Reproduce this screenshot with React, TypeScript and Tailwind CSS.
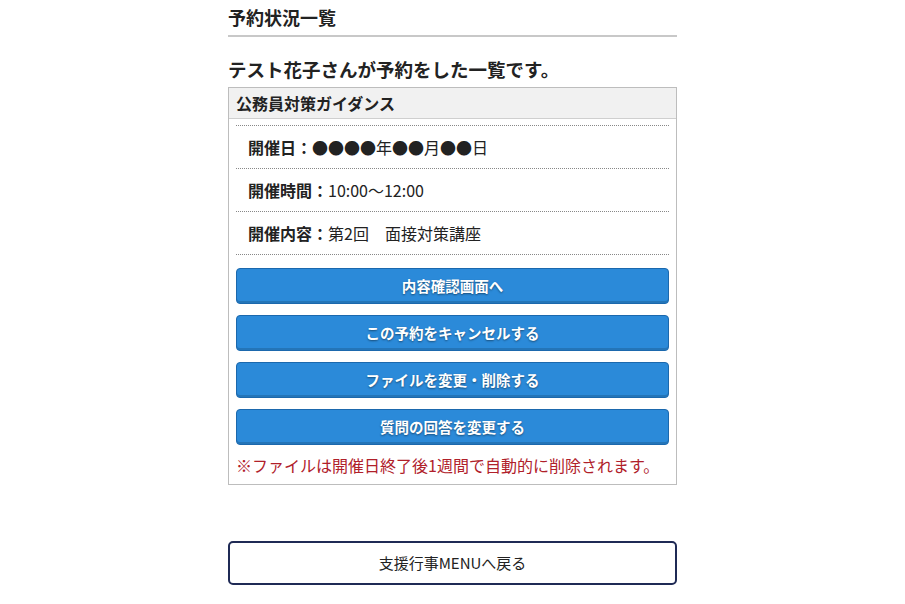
export default function App() {
  const rows = [
    { label: "開催日：", value: "●●●●年●●月●●日" },
    { label: "開催時間：", value: "10:00〜12:00" },
    { label: "開催内容：", value: "第2回　面接対策講座" },
  ];
  const buttons = ["内容確認画面へ", "この予約をキャンセルする", "ファイルを変更・削除する", "質問の回答を変更する"];

  return (
    <div className="min-h-screen bg-white font-['Noto_Sans_CJK_JP','Noto_Sans',sans-serif] text-[#222]">
      <div className="mx-auto w-[449px]">
        {/* page title */}
        <div className="border-b-2 border-[#c8c8c8] pt-[5px] pb-[6px]">
          <h1 className="text-[18px] font-bold leading-[24px]">予約状況一覧</h1>
        </div>

        <h2 className="mt-[19px] text-[18.5px] font-bold leading-[26px]">テスト花子さんが予約をした一覧です。</h2>

        {/* reservation card */}
        <div className="mt-[5px] border border-[#bdbdbd]">
          <div className="flex h-[31px] items-center border-b border-[#cfcfcf] bg-[#f1f1f1] px-[7px] text-[16px] font-bold">
            公務員対策ガイダンス
          </div>
          <div className="px-[7px] pt-[6px] pb-[8px]">
            <div className="border-t border-dotted border-[#888]">
              {rows.map((r) => (
                <div key={r.label} className="flex h-[43px] items-center border-b border-dotted border-[#888] pl-[12px] text-[16px]">
                  <span className="font-bold">{r.label}</span>
                  <span>{r.value}</span>
                </div>
              ))}
            </div>
            <div className="mt-[13px] flex flex-col gap-[11px]">
              {buttons.map((b) => (
                <button
                  key={b}
                  className="flex h-[36px] w-full items-center justify-center rounded-[4px] border border-[#1b68ad] bg-[#2b8ad9] text-[14.5px] font-bold text-white shadow-[inset_0_-2px_0_rgba(0,0,0,0.15)] [text-shadow:0_1px_2px_rgba(0,0,0,0.45)]"
                >
                  {b}
                </button>
              ))}
            </div>
            <p className="mt-[9px] text-[16px] leading-[22px] text-[#b0202a]">
              ※ファイルは開催日終了後1週間で自動的に削除されます。
            </p>
          </div>
        </div>

        <button className="mt-[56px] flex h-[44px] w-full items-center justify-center rounded-[5px] border-2 border-[#1f2a55] bg-white text-[15px] text-[#222]">
          支援行事MENUへ戻る
        </button>
      </div>
    </div>
  );
}
